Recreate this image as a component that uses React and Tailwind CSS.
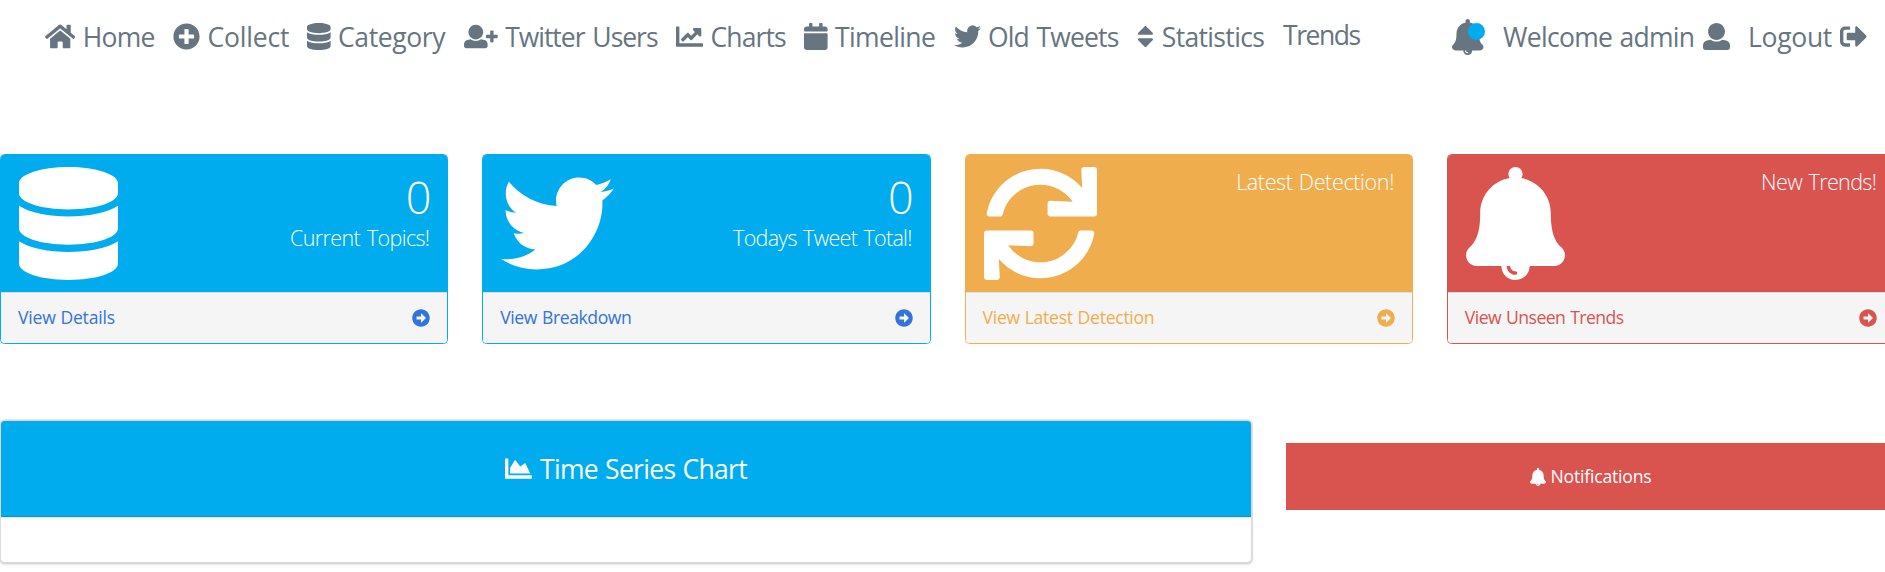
import React from "react";
import {
  FaHome, FaPlusCircle, FaDatabase, FaCalendar, FaTwitter, FaSort,
  FaSignOutAlt, FaArrowAltCircleRight, FaChartArea,
} from "react-icons/fa";

const USER_PATH =
  "M256 0c88.366 0 160 71.634 160 160s-71.634 160-160 160S96 248.366 96 160 167.634 0 256 0zm183.283 333.821l-71.313-17.828c-74.923 53.89-165.738 41.864-223.94 0l-71.313 17.828C29.981 344.505 0 382.903 0 426.955V464c0 26.51 21.49 48 48 48h416c26.51 0 48-21.49 48-48v-37.045c0-44.052-29.981-82.45-72.717-93.134z";

function UserIcon({ className }) {
  return (
    <svg viewBox="0 0 512 512" fill="currentColor" className={className}>
      <path d={USER_PATH} />
    </svg>
  );
}

function UserPlusIcon({ className }) {
  return (
    <svg viewBox="0 0 640 512" fill="currentColor" className={className}>
      <path d={USER_PATH} transform="translate(0 32) scale(.875)" />
      <path d="M624 224h-64v-64c0-8.8-7.2-16-16-16h-32c-8.8 0-16 7.2-16 16v64h-64c-8.8 0-16 7.2-16 16v32c0 8.8 7.2 16 16 16h64v64c0 8.8 7.2 16 16 16h32c8.8 0 16-7.2 16-16v-64h64c8.8 0 16-7.2 16-16v-32c0-8.8-7.2-16-16-16z" />
    </svg>
  );
}

function ChartLineIcon({ className }) {
  return (
    <svg viewBox="0 0 512 512" fill="currentColor" className={className}>
      <path d="M500 384c6.6 0 12 5.4 12 12v40c0 6.6-5.4 12-12 12H12c-6.6 0-12-5.4-12-12V76c0-6.6 5.4-12 12-12h40c6.6 0 12 5.4 12 12v308h436zM456 96H344c-21.4 0-32.1 25.9-17 41l32.9 32.9-72 72.9-55.6-55.6c-4.700-4.700-12.200-4.700-16.900 0L96.400 305c-4.700 4.600-4.800 12.200-.2 16.900l28.500 29.400c4.700 4.800 12.400 4.900 17.100.1l82.100-82.100 55.500 55.500c4.700 4.700 12.300 4.700 17 0l109.200-109.200L439 249c15.100 15.100 41 4.400 41-17V120c0-13.300-10.700-24-24-24z" />
    </svg>
  );
}

function BellIcon({ className }) {
  return (
    <svg viewBox="0 0 448 512" fill="currentColor" className={className}>
      <path d="M433.884 366.059C411.634 343.809 384 316.118 384 208c0-79.394-57.831-145.269-133.663-157.83A31.845 31.845 0 0 0 256 32c0-17.673-14.327-32-32-32s-32 14.327-32 32c0 6.75 2.095 13.008 5.663 18.17C121.831 62.731 64 128.606 64 208c0 108.118-27.643 135.809-49.893 158.059C-16.042 396.208 5.325 448 48.048 448H160c0 35.346 28.654 64 64 64s64-28.654 64-64h111.943c42.638 0 64.151-51.731 33.941-81.941zM224 472a8 8 0 0 1 0 16c-22.056 0-40-17.944-40-40h16c0 13.234 10.766 24 24 24z" />
    </svg>
  );
}

function SyncIcon({ className }) {
  return (
    <svg viewBox="0 0 512 512" fill="currentColor" className={className}>
      <path d="M440.935 12.574l3.966 82.766C399.416 41.904 331.674 8 256 8 134.813 8 33.933 94.924 12.296 209.824 10.908 217.193 16.604 224 24.103 224h49.084c5.57 0 10.377-3.842 11.676-9.259C103.407 137.408 172.931 80 256 80c60.893 0 114.512 30.856 146.104 77.801l-101.53-4.865c-6.845-.328-12.574 5.133-12.574 11.986v47.411c0 6.627 5.373 12 12 12h200.333c6.627 0 12-5.373 12-12V12c0-6.627-5.373-12-12-12h-47.411c-6.853 0-12.315 5.729-11.987 12.574zM256 432c-60.895 0-114.517-30.858-146.109-77.805l101.868 4.871c6.845.327 12.573-5.134 12.573-11.986v-47.412c0-6.627-5.373-12-12-12H12c-6.627 0-12 5.373-12 12V500c0 6.627 5.373 12 12 12h47.385c6.863 0 12.328-5.745 11.985-12.599l-4.129-82.575C112.725 470.166 180.405 504 256 504c121.187 0 222.067-86.924 243.704-201.824 1.388-7.369-4.308-14.176-11.807-14.176h-49.084c-5.57 0-10.377 3.842-11.676 9.259C408.593 374.592 339.069 432 256 432z" />
    </svg>
  );
}

const NAV = [
  { label: "Home", Icon: FaHome, icon: "w-[30.4px]", item: "w-[128px]", text: "tracking-[-0.75px]" },
  { label: "Collect", Icon: FaPlusCircle, icon: "w-[27px]", item: "w-[134px]", text: "tracking-[-0.18px]" },
  { label: "Category", Icon: FaDatabase, icon: "w-[23.6px]", item: "w-[157px]", text: "tracking-[-0.38px]" },
  { label: "Twitter Users", Icon: UserPlusIcon, icon: "w-[33.8px]", item: "w-[212px]", text: "tracking-[-1.02px] [word-spacing:2px]" },
  { label: "Charts", Icon: ChartLineIcon, icon: "w-[27px]", item: "w-[128px]", text: "tracking-[-0.85px]" },
  { label: "Timeline", Icon: FaCalendar, icon: "w-[23.6px]", item: "w-[149.5px]", text: "tracking-[-0.62px]" },
  { label: "Old Tweets", Icon: FaTwitter, icon: "w-[27px]", item: "w-[183px]", text: "tracking-[-0.82px] [word-spacing:1.5px]" },
  { label: "Statistics", Icon: FaSort, icon: "w-[16.9px]", item: "w-[146.5px]", text: "pl-px tracking-[-0.65px]" },
];

const CARDS = [
  {
    Icon: FaDatabase, iconSize: "w-[99px]", count: "0", label: "Current Topics!", link: "View Details",
    labelText: "tracking-[-0.64px] [word-spacing:2px]", linkText: "tracking-[-0.22px] [word-spacing:0.5px]",
    border: "border-[#00acee]", bg: "bg-[#00acee]", color: "text-[#3273dc]",
  },
  {
    Icon: FaTwitter, iconSize: "w-[113px]", count: "0", label: "Todays Tweet Total!", link: "View Breakdown",
    labelText: "tracking-[-0.72px] [word-spacing:1.5px]", linkText: "tracking-[-0.44px] [word-spacing:1px]",
    border: "border-[#00acee]", bg: "bg-[#00acee]", color: "text-[#3273dc]",
  },
  {
    Icon: SyncIcon, iconSize: "w-[113px]", label: "Latest Detection!", link: "View Latest Detection",
    labelText: "tracking-[-0.36px] [word-spacing:1px]", linkText: "tracking-[-0.28px] [word-spacing:0.5px]",
    border: "border-[#f0ad4e]", bg: "bg-[#f0ad4e]", color: "text-[#f0ad4e]",
  },
  {
    Icon: BellIcon, iconSize: "w-[99px]", label: "New Trends!", link: "View Unseen Trends",
    labelText: "tracking-[-0.63px] [word-spacing:1.5px]", linkText: "tracking-[-0.52px] [word-spacing:0.7px]",
    border: "border-[#d9534f]", bg: "bg-[#d9534f]", color: "text-[#d9534f]",
  },
];

function Navbar() {
  return (
    <nav className="flex h-[73px] items-center pl-[45px] text-[26.5px] whitespace-nowrap text-[#66757f]">
      {NAV.map(({ label, Icon, icon, item, text }) => (
        <a key={label} className={`flex shrink-0 items-center gap-[7.4px] ${item}`}>
          <Icon className={`h-[27px] shrink-0 ${icon}`} />
          <span className={`pt-0.5 ${text}`}>{label}</span>
        </a>
      ))}
      <a className="w-[169px] shrink-0 pb-px tracking-[-1.45px]">Trends</a>
      <a className="relative w-[51px] shrink-0">
        <BellIcon className="h-9 w-[31.5px]" />
        <span className="absolute top-[4px] left-4 size-[17px] rounded-full bg-[#00acee]" />
      </a>
      <a className="flex w-[245px] shrink-0 items-center justify-between pr-[18px]">
        <span className="pt-0.5 tracking-[-0.69px] [word-spacing:1px]">Welcome admin</span>
        <UserIcon className="size-[27px]" />
      </a>
      <a className="flex w-[118.5px] shrink-0 items-center justify-between">
        <span className="pt-0.5 tracking-[-0.3px]">Logout</span>
        <FaSignOutAlt className="size-[27px]" />
      </a>
    </nav>
  );
}

function StatCard({ Icon, iconSize, count, label, link, labelText, linkText, border, bg, color }) {
  return (
    <div className={`h-[190px] overflow-hidden rounded-[4.5px] border ${border}`}>
      <div className={`flex h-[137px] justify-between px-[18px] pt-3 text-right font-light text-white ${bg}`}>
        <Icon className={`h-[113px] shrink-0 ${iconSize}`} />
        <div className={count ? "pt-[3px]" : "pt-px"}>
          {count && <div className="-mr-px h-[54px] text-[45px] leading-[54px] tracking-[-1px]">{count}</div>}
          <div className={`text-[21.5px] leading-[27px] ${labelText}`}>{label}</div>
        </div>
      </div>
      <a className={`flex h-[51px] items-center justify-between border-t border-[#ddd] bg-[#f5f5f5] px-[17px] text-[17.6px] ${color}`}>
        <span className={`pb-px ${linkText}`}>{link}</span>
        <FaArrowAltCircleRight className="size-[18px]" />
      </a>
    </div>
  );
}

export default function App() {
  return (
    <div className="h-[572px] w-full overflow-hidden bg-white font-['Open_Sans','Noto_Sans',sans-serif]">
      <Navbar />
      <section className="mt-[81px] grid grid-cols-[repeat(4,448.4px)] gap-[33.9px]">
        {CARDS.map((card) => (
          <StatCard key={card.label} {...card} />
        ))}
      </section>
      <section className="mt-[76px] flex items-start">
        <div className="h-[143px] w-[1252px] shrink-0 overflow-hidden rounded-[4.5px] border border-[#dbdbdb] bg-white shadow-[0_2px_3px_rgba(10,10,10,0.1),0_0_0_1px_rgba(10,10,10,0.1)]">
          <h2 className="flex h-24 items-center justify-center gap-[8px] border-b border-[#0097d1] bg-[#00acee] text-[26.5px] text-white shadow-[0_1px_2px_rgba(10,10,10,0.1)]">
            <FaChartArea className="size-[27px]" />
            <span className="pt-0.5 tracking-[-0.7px] [word-spacing:1px]">Time Series Chart</span>
          </h2>
        </div>
        <div className="mt-[23px] ml-[34px] flex h-[67px] w-[609px] shrink-0 items-center justify-center gap-[5px] bg-[#d9534f] text-[17.6px] text-white">
          <BellIcon className="h-[18px] w-4" />
          <span className="tracking-[-0.2px]">Notifications</span>
        </div>
      </section>
    </div>
  );
}
